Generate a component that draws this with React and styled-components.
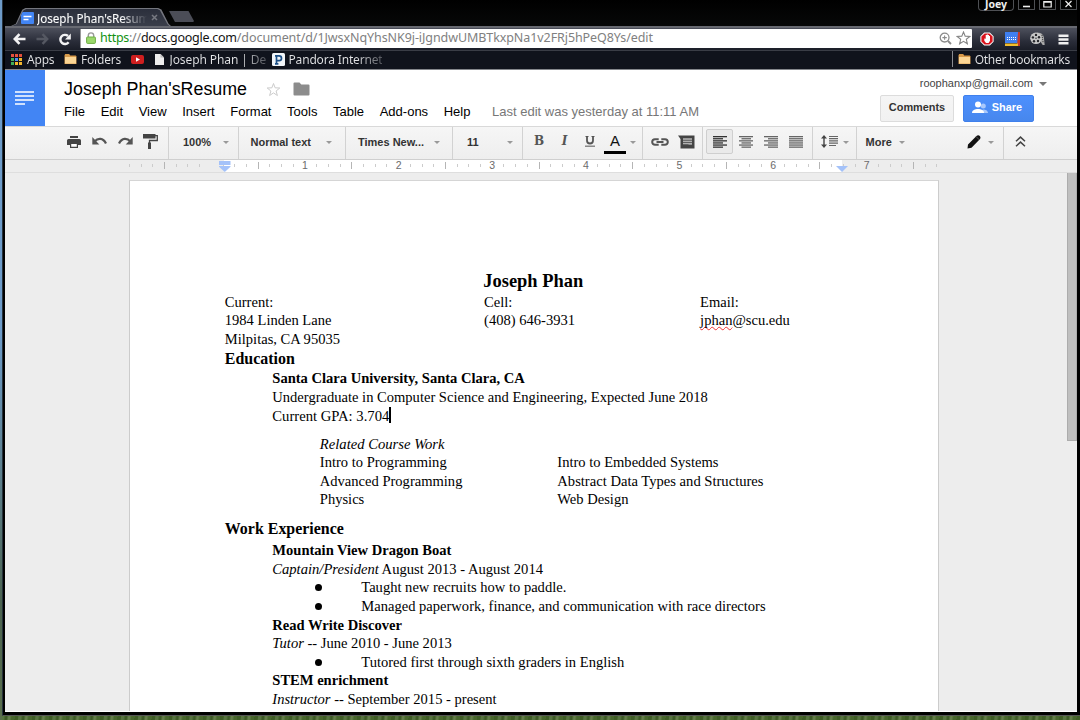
import React from 'react';
import styled, { createGlobalStyle, css } from 'styled-components';

const Global = createGlobalStyle`
  * { box-sizing: border-box; }
  body { margin: 0; overflow: hidden; font-family: "Liberation Sans", Arial, sans-serif; }
  svg { display: block; flex: none; }
`;

const uiFont = css`font-family: "Noto Sans", "Open Sans", sans-serif;`;

/* ---------- desktop and window ---------- */
const Desktop = styled.div`
  width: 1080px; height: 720px; padding-left: 2px; display: flex; flex-direction: column;
  background:
    linear-gradient(90deg, #6d9bc9 0 2px, transparent 2px) 0 0 / 2px 330px no-repeat,
    linear-gradient(#6d9bc9, #5b7d88 40%, #4b6350 70%, #5a6f4c) 0 330px / 2px 390px no-repeat,
    repeating-linear-gradient(97deg, #3f5d26 0 3px, #577440 4px 6px, #3d5a26 8px 9px, #647e4a 11px 12px, #48672d 14px 17px);
`;
const Frame = styled.div`
  height: 716px; padding: 0 3px 3px; background: #000; border-bottom: 1px solid #555;
  border-left: 1px solid #26323c; display: flex; flex-direction: column;
`;
const Inner = styled.div`
  flex: 1; display: flex; flex-direction: column; width: 1072px; margin-left: -1px; border-bottom: 1px solid #fff; min-height: 0;
`;

/* ---------- title bar ---------- */
const TitleBar = styled.div`
  height: 26px; flex: none; display: flex; align-items: flex-end; padding-left: 6px;
  background: linear-gradient(#000, #070808); ${uiFont}
`;
const TabEdge = styled.div`
  width: 160px; height: 18px; padding: 1px 1px 0; background: #74767e;
  clip-path: polygon(0 100%, 3% 88%, 7% 10%, 9% 0, 92% 0, 94% 8%, 98.5% 88%, 100% 100%);
`;
const Tab = styled.div`
  height: 17px; padding-left: 9px; display: flex; align-items: center;
  background: linear-gradient(#2b2f3c, #3a3e4a);
  clip-path: polygon(0 100%, 3% 88%, 7.2% 9%, 9% 0, 92% 0, 93.6% 8%, 98.3% 88%, 99.6% 100%);
`;
const TabTitle = styled.span`
  width: 114px; margin-left: 3px; white-space: nowrap; font-size: 11.7px; line-height: 16px; letter-spacing: -0.05px;
  color: transparent; -webkit-text-stroke: .2px transparent; background: linear-gradient(90deg, #fff 84px, #fff0 110px);
  background-clip: text; -webkit-background-clip: text;
`;
const NewTab = styled.div`
  width: 25px; height: 11px; margin: 0 0 4px -2px; background: #4b4d57;
  clip-path: polygon(0 0, 78% 0, 100% 90%, 97% 100%, 24% 100%);
`;
const WinButtons = styled.div`
  margin-left: auto; align-self: flex-start; display: flex; gap: 4px; 
`;
const WinButton = styled.div`
  width: ${p => p.$w || 17}px; height: ${p => (p.$w ? 11 : 10)}px; border: 1px solid #4e5054; border-top: 0;
  border-radius: 0 0 ${p => (p.$w ? 4 : 1)}px ${p => (p.$w ? 4 : 1)}px;
  display: flex; justify-content: center; color: #eee; font-size: 10.5px; line-height: 9px; font-weight: 700;
`;

/* ---------- navigation ---------- */
const NavBar = styled.div`
  height: 24px; flex: none; border-top: 2px solid #686a72; display: flex; align-items: center;
  background: linear-gradient(#4d505c, #2a2d39 60%, #1b1e28); padding: 0 8px; 
`;
const NavIcon = styled.span`width: ${p => p.$w}px; display: flex; justify-content: ${p => p.$j || 'flex-start'};`;
const UrlBox = styled.div`
  width: 893px; height: 19px; background: #fff; border-radius: 1px; display: flex; align-items: center;
  padding: 0 1px 0 5px; margin: 0 8px 2px 0; border-left: 1px solid #999;
`;
const Url = styled.span`
  ${uiFont} margin-left: 4px; font-size: 12.5px; line-height: 18px; white-space: pre; color: #808080;
  b { font-weight: 400; color: #111; } i { font-style: normal; color: #129212; }
`;
const Host = styled.span`letter-spacing: -0.27px;`;
const Path = styled.span`letter-spacing: -0.08px;`;
const UrlTools = styled.span`margin-left: auto; display: flex; gap: 4px; align-items: center;`;

const Bookmarks = styled.div`
  height: 20px; flex: none; display: flex; align-items: center; padding: 0 0 2px 6px; ${uiFont}
  background: #10131c; border-top: 1px solid #3a3d46; border-bottom: 1px solid #85878c;
`;
const Bookmark = styled.div`
  width: ${p => p.$w}px; display: flex; align-items: center; flex: none;
`;
const BmIcon = styled.span`width: ${p => p.$w || 17}px; flex: none;`;
const BmText = styled.span`
  font-size: 12px; line-height: 17px; white-space: nowrap; width: ${p => p.$w}px; letter-spacing: ${p => p.$s || 0}px;
  color: transparent; background: ${p => (p.$fade ? 'linear-gradient(90deg, #e3e4e6 72%, #e3e4e650 100%)' : '#e3e4e6')};
  background-clip: text; -webkit-background-clip: text;
`;
const Other = styled.div`
  margin-left: auto; height: 16px; border-left: 1px solid #8a8c92; padding-left: 5px; display: flex; align-items: center; margin-right: 7px;
`;

/* ---------- docs header ---------- */
const Header = styled.div`
  height: 56px; flex: none; background: #fff; display: flex;
`;
const DocsLogo = styled.div`
  width: 39.6px; background: #4285f4; display: flex; align-items: center; justify-content: center; padding-bottom: 1px;
`;
const HeadMain = styled.div`padding: 9px 0 0 19.5px; flex: 1; display: flex; flex-direction: column;`;
const TitleRow = styled.div`display: flex; align-items: center; height: 20px;`;
const Title = styled.span`font-size: 17.85px; line-height: 20px; width: 201.5px; color: #000;`;
const MenuRow = styled.div`
  display: flex; gap: 15.6px; height: 16px; margin-top: 4.5px; font-size: 13px; line-height: 16px; color: #000; white-space: nowrap;
`;
const LastEdit = styled.span`color: #777; margin-left: 6px;`;
const HeadSide = styled.div`
  display: flex; flex-direction: column; align-items: flex-end; padding-top: 5px;
`;
const Account = styled.div`
  display: flex; align-items: center; gap: 6px; font-size: 11px; line-height: 16px; color: #444; padding-right: 30px; margin-top: -0.5px;
`;
const Buttons = styled.div`display: flex; gap: 9px; margin-top: 4px; padding-right: 43px;`;
const Button = styled.div`
  width: ${p => p.$w}px; height: 27px; border-radius: 2px; font-size: 10.9px; font-weight: 700;
  display: flex; align-items: center; justify-content: center; gap: 4px; padding: 0 ${p => (p.$primary ? 3 : 0)}px 2px 0;
  color: ${p => (p.$primary ? '#fff' : '#333')};
  background: ${p => (p.$primary ? 'linear-gradient(#4d90fe, #4787ed)' : 'linear-gradient(#f5f5f5, #f1f1f1)')};
  border: 1px solid ${p => (p.$primary ? '#3f80ec' : '#dcdcdc')};
`;

/* ---------- docs toolbar ---------- */
const Toolbar = styled.div`
  height: 34px; flex: none; display: flex; border-top: 1px solid #d9d9d9; border-bottom: 1px solid #cfcfcf;
  background: linear-gradient(#f6f6f6, #eee); font-size: 11px; font-weight: 700; color: #333;
`;
const Group = styled.div`
  width: ${p => p.$w}px; padding: 0 ${p => p.$r || 0}px 3px ${p => p.$l || 0}px; flex: none; display: flex; align-items: center;
  border-right: ${p => (p.$last ? 0 : 1)}px solid #d2d2d2; white-space: nowrap;
`;
const Cell = styled.div`
  width: ${p => p.$w || 25.3}px; height: 25px; flex: none; display: flex; align-items: center; justify-content: center;
  ${p => p.$on && css`background: #eaeaea; border: 1px solid #cfcfcf; border-radius: 2px;`}
`;
const Caret = styled.i`
  width: 0; height: 0; margin-left: ${p => p.$ml || 'auto'}; margin-top: 2px; flex: none;
  border: ${p => p.$s || 3}px solid transparent; border-top-color: ${p => p.$c || '#999'}; border-bottom: 0;
`;
const Push = styled.span`margin-left: auto;`;
const Glyph = styled.span`
  font: ${p => (p.$i ? 'italic ' : '')}700 12px/14px "DejaVu Serif", serif; color: #555; margin-top: -1px;
`;
const ColorA = styled.span`
  width: 22px; height: 22px; border-bottom: 3px solid #000; font-size: 15px; font-weight: 400; line-height: 18px; color: #111; text-align: center;
  margin-top: 3px;
`;

/* ---------- ruler ---------- */
const Ruler = styled.div`
  height: 13px; flex: none; display: flex; padding-left: 118.6px; border-bottom: 1px solid #dedede; position: relative;
  background: linear-gradient(90deg, #ededed 219px, #fff 219px 836.5px, #ededed 836.5px);
`;
const Mark = styled.span`
  width: 11.71px; height: 11px; flex: none; display: flex; align-items: center; justify-content: center;
  font-size: 10.5px; line-height: 11px; color: #6b6b6b;
`;
const Tick = styled.i`width: 1px; height: ${p => (p.$long ? 7 : 3)}px; background: ${p => (p.$long ? '#b5b5b5' : '#ccc')};`;
const Indent = styled.span`position: absolute; left: ${p => p.$x}px; top: ${p => p.$y}px;`;

/* ---------- page ---------- */
const Canvas = styled.div`
  flex: 1; min-height: 0; background: #ededed; display: flex; align-items: flex-start; padding-left: 124px; overflow: hidden;
`;
const Page = styled.div`
  width: 810px; height: 560px; margin-top: 7px; background: #fff; border: 1px solid #ccc; border-top-color: #d5d5d5;
  padding: 90px 0 0 94.8px; font-family: "Liberation Serif", "Times New Roman", serif; color: #000;
`;
const Scroll = styled.div`width: 10px; height: 268px; margin-left: auto; background: #bfbfbf; border: 1px solid #acacac; border-top: 0;`;
const Line = styled.div`
  height: ${p => p.$h || 18.6}px; line-height: ${p => p.$h || 18.6}px; padding-left: ${p => p.$in || 0}px; margin-top: ${p => p.$mt || 0}px;
  font-size: ${p => p.$fs || 14.55}px; font-weight: ${p => (p.$b ? 700 : 400)}; white-space: pre; display: flex;
`;
const Columns = styled.div`display: grid; grid-template-columns: ${p => p.$cols}; padding-left: ${p => p.$in || 0}px;`;
const Cursor = styled.span`width: 1.5px; height: 16px; background: #000; margin-top: 0;`;
const Misspelt = styled.span`text-decoration: underline wavy #e33 1px; text-underline-offset: 1px; text-decoration-skip-ink: none;`;
const Dot = styled.span`width: 46px; display: flex; align-items: center; &::before { content: ''; width: 7px; height: 7px; border-radius: 50%; background: #000; margin-left: -.5px; }`;

/* ---------- icons ---------- */
const Folder = () => (
  <svg width="13" height="12" viewBox="0 0 13 12"><path d="M.5 2.2 1.2 1h4l1 1.500h5.500l.8.8V11H.5z" fill="#d89a4a" /><path d="M1 4h11v6.600H1z" fill="#fbd594" /></svg>
);
const DocIcon = () => (
  <svg width="13" height="12" viewBox="0 0 13 12"><rect width="13" height="12" rx="1" fill="#4285f4" /><path d="M2.500 4.500h8M2.500 7.500h5" stroke="#fff" strokeWidth="1.500" /></svg>
);
const AppsIcon = () => (
  <svg width="11" height="11" viewBox="0 0 11 11">
    {['#e5503c', '#e5503c', '#e5503c', '#3fae5a', '#4c8df5', '#f3b62c', '#3fae5a', '#f3b62c', '#f3b62c'].map((c, i) => (
      <rect key={i} x={(i % 3) * 4} y={Math.floor(i / 3) * 4} width="3" height="3" fill={c} />
    ))}
  </svg>
);
const Align = ({ kind }) => {
  const short = { left: [0, 10], center: [2.5, 9.5], right: [4, 10], full: [0, 14] }[kind];
  return (
    <svg width="14" height="12" viewBox="0 0 14 12">
      {[0, 1, 2, 3, 4, 5].map(i => (
        <rect key={i} x={i % 2 ? short[0] : 0} y={i * 2.1} width={i % 2 ? short[1] : 14} height="1.3" fill={kind === 'left' ? '#333' : '#666'} />
      ))}
    </svg>
  );
};

const menus = ['File', 'Edit', 'View', 'Insert', 'Format', 'Tools', 'Table', 'Add-ons', 'Help'];

export default function App() {
  return (
    <Desktop>
      <Global />
      <Frame>
        <Inner>
          <TitleBar>
            <TabEdge>
              <Tab>
                <DocIcon />
                <TabTitle>Joseph Phan'sResum</TabTitle>
                <svg width="7" height="7" viewBox="0 0 7 7"><path d="m1 1 5 5M6 1 1 6" stroke="#777982" strokeWidth="1.5" /></svg>
              </Tab>
            </TabEdge>
            <NewTab />
            <WinButtons>
              <WinButton $w={36}>Joey</WinButton>
              <WinButton><svg width="9" height="9"><path d="M1 6.500h7" stroke="#eee" strokeWidth="1.600" /></svg></WinButton>
              <WinButton><svg width="9" height="9"><path d="M.8 1.500h7.400v5.500H.8zM1 2.200h7" fill="none" stroke="#eee" strokeWidth="1.200" /></svg></WinButton>
              <WinButton><svg width="9" height="9"><path d="m1.500 1 6 6m0-6-6 6" stroke="#eee" strokeWidth="1.200" /></svg></WinButton>
            </WinButtons>
          </TitleBar>

          <NavBar>
            <NavIcon $w={23}><svg width="13" height="12" viewBox="0 0 13 12"><path d="M12.500 6H2.500M6.500 1.200 1.800 6l4.700 4.800" fill="none" stroke="#f3f3f4" strokeWidth="2.600" /></svg></NavIcon>
            <NavIcon $w={22}><svg width="13" height="12" viewBox="0 0 13 12"><path d="M.5 6h10M6.500 1.200 11.200 6l-4.700 4.800" fill="none" stroke="#555862" strokeWidth="2.400" /></svg></NavIcon>
            <NavIcon $w={22}><svg width="14" height="13" viewBox="0 0 14 13"><path d="M10.600 9.300A4.600 4.600 0 1 1 10 3" fill="none" stroke="#f3f3f4" strokeWidth="2.400" /><path d="M12.800.5v6H7z" fill="#f3f3f4" /></svg></NavIcon>
            <UrlBox>
              <svg width="10" height="12" viewBox="0 0 10 12"><path d="M2.300 6V3.600a2.700 2.700 0 0 1 5.400 0V6" fill="none" stroke="#999" strokeWidth="1.400" /><rect x=".6" y="5" width="8.800" height="6.400" rx=".8" fill="#9bd86c" stroke="#6fae45" /></svg>
              <Url><Host><i>https</i>://<b>docs.google.com</b></Host><Path>/document/d/1JwsxNqYhsNK9j-iJgndwUMBTkxpNa1v2FRj5hPeQ8Ys/edit</Path></Url>
              <UrlTools>
                <svg width="13" height="13" viewBox="0 0 13 13"><circle cx="5.600" cy="5.600" r="4.400" fill="none" stroke="#8a8a8a" strokeWidth="1.300" /><path d="M5.600 3.400v4.400M3.400 5.600h4.400" stroke="#8a8a8a" strokeWidth="1.100" /><path d="m9 9 3 3" stroke="#8a8a8a" strokeWidth="1.800" /></svg>
                <svg width="15" height="14" viewBox="0 0 15 14"><path d="m7.500 1 1.700 4.100 4.700.3-3.600 2.900 1.100 4.500-3.900-2.400-3.900 2.400 1.100-4.500L1.100 5.400l4.700-.3z" fill="#fff" stroke="#858585" strokeWidth="1.100" /></svg>
              </UrlTools>
            </UrlBox>
            <NavIcon $w={25}><svg width="14" height="14" viewBox="0 0 14 14"><path d="M4.200.4h5.600l3.800 3.800v5.600l-3.800 3.800H4.200L.4 9.800V4.200z" fill="#fff" /><path d="M4.600 1.400h4.800l3.200 3.200v4.800l-3.200 3.200H4.600L1.400 9.400V4.600z" fill="#d9131c" /><path d="M4.300 6.500v2.300L6 11h2.600L10 8.800V4h-1V3H8v-.5H6.700V3h-1v3.800z" fill="#fff" /></svg></NavIcon>
            <NavIcon $w={25}><svg width="15" height="14" viewBox="0 0 15 14"><path d="M0 0h13v11H0z" fill="#3f7ff0" /><path d="M13 0h2v14h-3z" fill="#c2392b" /><path d="M0 11.500h13V14H0z" fill="#f2bd2d" /><path d="M2 5.500h9M2 7.500h9" stroke="#fff" strokeDasharray="1 1" /></svg></NavIcon>
            <NavIcon $w={28}><svg width="15" height="14" viewBox="0 0 15 14"><path d="M7 .5c5 0 7 3 7 6l.7 6.500h-2L10 9z" fill="#aaa" /><circle cx="6" cy="6.300" r="5.800" fill="#c6c6c6" /><g fill="#25262b"><circle cx="6" cy="2.900" r="1.200" /><circle cx="9" cy="5.200" r="1.200" /><circle cx="8" cy="9" r="1.200" /><circle cx="4" cy="9.200" r="1.200" /><circle cx="2.900" cy="5.400" r="1.200" /><circle cx="6" cy="6.300" r=".7" /></g><path d="m12 3 1.200 8" stroke="#333" strokeDasharray="1 1" /></svg></NavIcon>
            <svg width="11" height="11" viewBox="0 0 11 11"><path d="M.5 1.700h10M.5 5.500h10M.5 9.300h10" stroke="#f0f0f0" strokeWidth="2.400" /></svg>
          </NavBar>

          <Bookmarks>
            <Bookmark $w={53}><BmIcon $w={16}><AppsIcon /></BmIcon><BmText $s={-0.2}>Apps</BmText></Bookmark>
            <Bookmark $w={67}><BmIcon><Folder /></BmIcon><BmText $s={-0.2}>Folders</BmText></Bookmark>
            <Bookmark $w={24}><svg width="13" height="9" viewBox="0 0 13 9"><rect width="13" height="9" rx="2" fill="#cf1f1f" /><path d="m5 2.300 4 2.200-4 2.200z" fill="#fff" /></svg></Bookmark>
            <Bookmark $w={117}><BmIcon $w={14.5}><svg width="9" height="11" viewBox="0 0 9 11"><path d="M0 0h5.500L9 3.500V11H0z" fill="#eee" /><path d="M5.500 0v3.500H9" fill="#bbb" /></svg></BmIcon><BmText $w={96} $s={-0.1} $fade>Joseph Phan | De</BmText></Bookmark>
            <Bookmark $w={110}><BmIcon $w={16.5}><svg width="13" height="13" viewBox="0 0 13 13"><rect width="13" height="13" rx="1.500" fill="#f3f6f9" /><path d="M4.500 11V2.800h2.600a2.400 2.400 0 0 1 0 4.800H4.500M3 10.800h3.400M3 2.800h2" fill="none" stroke="#1c4f86" strokeWidth="1.700" /></svg></BmIcon><BmText $w={96} $s={-0.17} $fade>Pandora Internet</BmText></Bookmark>
            <Other><BmIcon><Folder /></BmIcon><BmText $s={-0.27}>Other bookmarks</BmText></Other>
          </Bookmarks>

          <Header>
            <DocsLogo><svg width="19" height="14" viewBox="0 0 19 14"><path d="M0 1h19M0 5h19M0 9h19M0 13h10" stroke="#fff" strokeWidth="1.700" /></svg></DocsLogo>
            <HeadMain>
              <TitleRow>
                <Title>Joseph Phan'sResume</Title>
                <svg width="15" height="15" viewBox="0 0 15 15"><path d="m7.500 1.500 1.600 4.300 4.700.2L10.100 9l1.300 4.500-3.900-2.600-3.900 2.600L4.900 9 1.200 6l4.700-.2z" fill="none" stroke="#ccc" /></svg>
                <NavIcon $w={29} $j="flex-end"><svg width="17" height="14" viewBox="0 0 17 14"><path d="M1.500.5h5L8.300 2.500H15.500a1 1 0 0 1 1 1v9a1 1 0 0 1-1 1h-14a1 1 0 0 1-1-1v-11a1 1 0 0 1 1-1z" fill="#8c8c8c" /></svg></NavIcon>
              </TitleRow>
              <MenuRow>{menus.map(m => <span key={m}>{m}</span>)}<LastEdit>Last edit was yesterday at 11:11 AM</LastEdit></MenuRow>
            </HeadMain>
            <HeadSide>
              <Account>roophanxp@gmail.com<Caret $s={4} $c="#777" $ml="0" /></Account>
              <Buttons>
                <Button $w={74}>Comments</Button>
                <Button $w={71} $primary>
                  <svg width="16" height="13" viewBox="0 0 16 13"><circle cx="11.300" cy="5" r="2.500" fill="#a9c8fb" /><path d="M9 12c0-3 1-3.500 2.500-3.500S16 9.500 16 12z" fill="#a9c8fb" /><circle cx="6" cy="3.500" r="3" fill="#fff" /><path d="M0 12c0-3 3-4 6-4s6 1 6 4z" fill="#fff" /></svg>
                  Share
                </Button>
              </Buttons>
            </HeadSide>
          </Header>

          <Toolbar>
            <Group $w={164} $l={56}>
              <Cell $w={25.7}><svg width="14" height="12" viewBox="0 0 14 12"><path d="M3 0h8v2H3zM1.500 3h11A1.500 1.500 0 0 1 14 4.500V9h-3V7H3v2H0V4.500A1.500 1.500 0 0 1 1.500 3z" fill="#444" /><path d="M3.600 7.500h6.800V11.400H3.600z" fill="#fff" stroke="#444" strokeWidth="1.200" /></svg></Cell>
              <Cell $w={25.7}><svg width="15" height="9" viewBox="0 0 15 9"><path d="M.3 0v7.500h7z" fill="#555" /><path d="M2.500 4.500C6 .800 11 .500 14 6.500" fill="none" stroke="#555" strokeWidth="2.300" /></svg></Cell>
              <Cell $w={25.7}><svg width="15" height="9" viewBox="0 0 15 9"><path d="M14.700 0v7.500h-7z" fill="#555" /><path d="M12.500 4.500C9 .800 4 .500 1 6.500" fill="none" stroke="#555" strokeWidth="2.300" /></svg></Cell>
              <Cell $w={25.7}><svg width="15" height="15" viewBox="0 0 15 15"><path d="M0 0h12.500v4.500H0z" fill="#444" /><path d="M12 1.700h2.300V6.500H6.500V9" fill="none" stroke="#444" strokeWidth="1.300" /><path d="M5 8.500h3V15H5z" fill="#444" /></svg></Cell>
            </Group>
            <Group $w={70} $l={14} $r={9}>100%<Caret /></Group>
            <Group $w={107} $l={11.5} $r={13}>Normal text<Caret /></Group>
            <Group $w={107} $l={12} $r={12.5}>Times New...<Caret /></Group>
            <Group $w={70} $l={14} $r={9}>11<Caret /></Group>
            <Group $w={120} $l={3.5} $r={6}>
              <Cell><Glyph>B</Glyph></Cell>
              <Cell><Glyph $i>I</Glyph></Cell>
              <Cell><svg width="10" height="11" viewBox="0 0 10 11"><path d="M2 0v4.500a3 3 0 0 0 6 0V0" fill="none" stroke="#555" strokeWidth="1.800" /><path d="M.500.500h3M6.500.500h3" stroke="#555" /><path d="M0 10.200h10" stroke="#777" strokeWidth="1.300" /></svg></Cell>
              <Cell><ColorA>A</ColorA></Cell>
              <Caret />
            </Group>
            <Group $w={60} $l={4}>
              <Cell $w={26.5}><svg width="18" height="8" viewBox="0 0 18 8"><path d="M7.700 1.200H4a2.800 2.800 0 0 0 0 5.600h3.700M10.300 1.200H14a2.800 2.800 0 0 1 0 5.600h-3.700M5.500 4h7" fill="none" stroke="#555" strokeWidth="2" /></svg></Cell>
              <Cell $w={26}><svg width="17" height="14" viewBox="0 0 17 14"><path d="M0 .5h16.500v13H2.500V4z" fill="#444" /><path d="M5 3.200h9v6.500H5z" fill="#b0b0b0" /><path d="M5 5.300h9M5 7.500h9M5 9.700h5.500" stroke="#555" strokeWidth=".9" /></svg></Cell>
            </Group>
            <Group $w={110} $l={3}>
              <Cell $w={27} $on><Align kind="left" /></Cell>
              <Cell $w={25}><Align kind="center" /></Cell>
              <Cell><Align kind="right" /></Cell>
              <Cell><Align kind="full" /></Cell>
            </Group>
            <Group $w={44} $l={4} $r={7.5}>
              <Cell $w={25}><svg width="17" height="13" viewBox="0 0 17 13"><path d="M3 2v9" stroke="#444" strokeWidth="1.400" /><path d="M3 0l3 3.500H0zM3 13l3-3.500H0z" fill="#444" /><path d="M8 1.500h9M8 3.700h9M8 5.900h9M8 8.100h9M8 10.500h7" stroke="#666" strokeWidth="1.200" /></svg></Cell>
              <Caret />
            </Group>
            <Group $w={147} $l={8.5} $r={9}>
              More<Caret $ml="7.5px" />
              <Push><Cell $w={29}><svg width="14" height="14" viewBox="0 0 14 14"><path d="m.500 13.500.500-4L9.500 1c1-1 2.500-.8 3.300 0s1 2.200 0 3.200L4.500 12.800z" fill="#111" /><path d="m9 1.500 3.500 3.500" stroke="#777" strokeWidth=".7" /></svg></Cell></Push>
              <Caret $ml="0" />
            </Group>
            <Group $last $w={40} $l={4}>
              <Cell $w={25}><svg width="11" height="11" viewBox="0 0 11 11"><path d="m1 5.300 4.500-4.200L10 5.300M1 10.300l4.500-4.200 4.500 4.200" fill="none" stroke="#444" strokeWidth="1.500" /></svg></Cell>
            </Group>
          </Toolbar>

          <Ruler>
            {Array.from({ length: 70 }, (_, k) => (
              <Mark key={k}>{k % 8 === 7 ? (k > 7 ? (k - 7) / 8 : '') : <Tick $long={k % 8 === 3} />}</Mark>
            ))}
            <Indent $x={213.5} $y={1}><svg width="12" height="11" viewBox="0 0 12 11"><path d="M0 0h11.500v4H0zM0 5h11.500v.7L5.800 11 0 5.700z" fill="#a4c2f9" /></svg></Indent>
            <Indent $x={831} $y={6}><svg width="12" height="6" viewBox="0 0 12 6"><path d="M0 0h12L6 6z" fill="#a4c2f9" /></svg></Indent>
          </Ruler>

          <Canvas>
            <Page>
              <Line $h={21.5} $fs={18.45} $b $in={258.5}>Joseph Phan</Line>
              <Columns $cols="259.3px 216px 1fr">
                <Line>Current:</Line><Line>Cell:</Line><Line>Email:</Line>
                <Line>1984 Linden Lane</Line><Line>(408) 646-3931</Line><Line><Misspelt>jphan</Misspelt>@scu.edu</Line>
                <Line>Milpitas, CA 95035</Line>
              </Columns>
              <Line $h={21} $fs={15.95} $b>Education</Line>
              <Line $h={19.2} $b $in={47.5}>Santa Clara University, Santa Clara, CA</Line>
              <Line $in={47.5}>Undergraduate in Computer Science and Engineering, Expected June 2018</Line>
              <Line $in={47.5} $fs={14.65}>Current GPA: 3.704<Cursor /></Line>
              <Line $in={95} $mt={9} $fs={14.65}><i>Related Course Work</i></Line>
              <Columns $cols="237.5px 1fr" $in={95}>
                <Line>Intro to Programming</Line><Line>Intro to Embedded Systems</Line>
                <Line>Advanced Programming</Line><Line $fs={14.6}>Abstract Data Types and Structures</Line>
                <Line>Physics</Line><Line>Web Design</Line>
              </Columns>
              <Line $h={20.5} $mt={10.3} $fs={15.95} $b>Work Experience</Line>
              <Line $h={20} $b $in={47.5}>Mountain View Dragon Boat</Line>
              <Line $in={47.5} $fs={14.6}><i>Captain/President</i> August 2013 - August 2014</Line>
              <Line $in={90.5}><Dot />Taught new recruits how to paddle.</Line>
              <Line $in={90.5}><Dot />Managed paperwork, finance, and communication with race directors</Line>
              <Line $b $in={47.5}>Read Write Discover</Line>
              <Line $in={47.5}><i>Tutor</i> -- June 2010 - June 2013</Line>
              <Line $in={90.5}><Dot />Tutored first through sixth graders in English</Line>
              <Line $b $in={47.5}>STEM enrichment</Line>
              <Line $in={47.5}><i>Instructor</i> -- September 2015 - present</Line>
            </Page>
            <Scroll />
          </Canvas>
        </Inner>
      </Frame>
    </Desktop>
  );
}
